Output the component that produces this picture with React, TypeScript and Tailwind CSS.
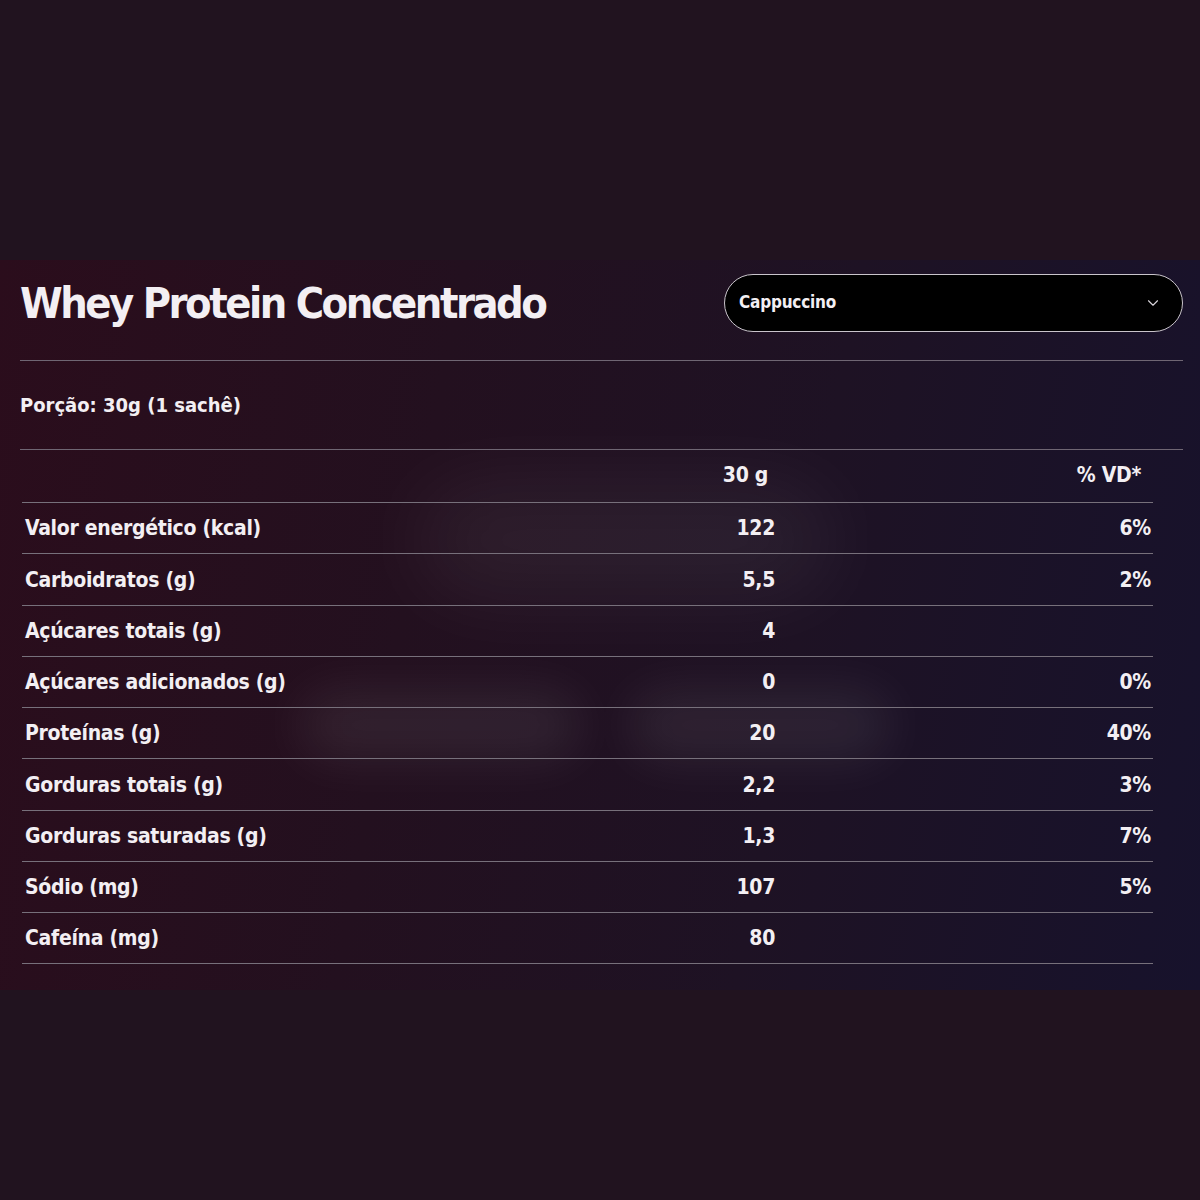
import { ChevronDown } from "lucide-react";

const rows = [
  { label: "Valor energético (kcal)", value: "122", vd: "6%" },
  { label: "Carboidratos (g)", value: "5,5", vd: "2%" },
  { label: "Açúcares totais (g)", value: "4", vd: "" },
  { label: "Açúcares adicionados (g)", value: "0", vd: "0%" },
  { label: "Proteínas (g)", value: "20", vd: "40%" },
  { label: "Gorduras totais (g)", value: "2,2", vd: "3%" },
  { label: "Gorduras saturadas (g)", value: "1,3", vd: "7%" },
  { label: "Sódio (mg)", value: "107", vd: "5%" },
  { label: "Cafeína (mg)", value: "80", vd: "" },
];

const font = "font-['Liberation_Sans_Narrow','DejaVu_Sans_Condensed',sans-serif]";

export default function App() {
  return (
    <div className={`min-h-[1200px] w-[1200px] bg-[#21131f] text-[#f3eff3] ${font}`}>
      <div className="h-[260px]" />
      {/* PANEL */}
      <div className="relative h-[730px] overflow-hidden bg-[linear-gradient(100deg,#2b0d1c_0%,#23101f_35%,#1e1224_65%,#17122c_100%)] pl-5 pr-[17px] pt-[14px]">
        {/* blurred blobs */}
        <div className="pointer-events-none absolute left-[420px] top-[225px] h-[110px] w-[410px] rounded-full bg-white/[0.06] blur-2xl" />
        <div className="pointer-events-none absolute left-[300px] top-[430px] h-[70px] w-[280px] rounded-full bg-white/[0.07] blur-xl" />
        <div className="pointer-events-none absolute left-[630px] top-[430px] h-[70px] w-[260px] rounded-full bg-white/[0.07] blur-xl" />

        <div className="relative">
          {/* HEADER */}
          <div className="flex items-center justify-between">
            <h1 className="text-[43px] font-bold leading-none tracking-[-2.5px]">Whey Protein Concentrado</h1>
            <div className="flex h-[58px] w-[459px] items-center justify-between rounded-full border-[1.5px] border-[#c9c4cb] bg-black pl-[14px] pr-[20px]">
              <span className="text-[17px] font-bold tracking-[-0.2px]">Cappuccino</span>
              <ChevronDown className="h-[18px] w-[18px] text-[#d8d4da]" strokeWidth={1.5} />
            </div>
          </div>

          <div className="mt-[28px] h-px bg-[#6f6673]" />

          <div className="flex h-[88px] items-center text-[20px] font-bold tracking-[0px]">Porção: 30g (1 sachê)</div>

          <div className="h-px bg-[#6f6673]" />

          {/* TABLE */}
          <div className="ml-[2px] w-[1131px]">
            <div className="grid h-[53px] grid-cols-[553px_200px_378px] items-center border-b border-[#77707b] text-[21px] font-bold tracking-[-0.3px]">
              <div />
              <div className="pr-[7px] text-right">30 g</div>
              <div className="pr-[12px] text-right">% VD*</div>
            </div>
            {rows.map((r) => (
              <div
                key={r.label}
                className="grid h-[51.25px] grid-cols-[553px_200px_378px] items-center border-b border-[#77707b] pt-[2px] text-[21px] font-bold tracking-[-0.3px]"
              >
                <div className="pl-[3px]">{r.label}</div>
                <div className="text-right">{r.value}</div>
                <div className="pr-[2px] text-right">{r.vd}</div>
              </div>
            ))}
          </div>
        </div>
      </div>
    </div>
  );
}
